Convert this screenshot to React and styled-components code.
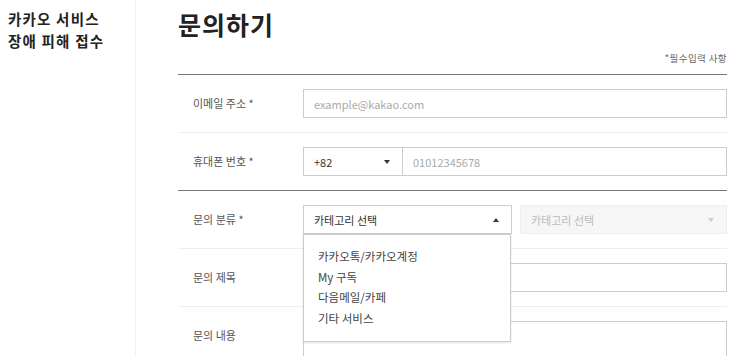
import React from "react";
import styled, { createGlobalStyle } from "styled-components";

const GlobalStyle = createGlobalStyle`
  html, body {
    margin: 0;
    padding: 0;
    background: #fff;
  }
  body {
    font-family: "Noto Sans CJK KR", "Noto Sans", sans-serif;
    color: #333;
    overflow: hidden;
  }
`;

const Page = styled.div`
  display: flex;
  width: 745px;
  height: 356px;
  overflow: hidden;
`;

const Side = styled.aside`
  width: 127px;
  padding: 8px 0 0 8px;
  border-right: 1px solid #f3f3f3;
  flex-shrink: 0;

  h2 {
    margin: 0;
    font-size: 14.5px;
    line-height: 22px;
    font-weight: 700;
    color: #222;
    letter-spacing: 1.2px;
  }
`;

const Main = styled.main`
  width: 549px;
  padding: 8px 0 0 42px;
`;

const Title = styled.h1`
  margin: 0;
  font-size: 25px;
  line-height: 32px;
  font-weight: 700;
  color: #222;
  letter-spacing: 1px;
`;

const Note = styled.p`
  margin: 11px 0 0;
  font-size: 9.5px;
  line-height: 14px;
  color: #666;
  text-align: right;
  letter-spacing: 0.4px;
`;

const Form = styled.div`
  margin-top: 9px;
  border-top: 1px solid #777;
`;

const Row = styled.div`
  position: relative;
  display: flex;
  align-items: ${(p) => (p.$top ? "flex-start" : "center")};
  padding: 14px 0;
  border-bottom: 1px solid ${(p) => (p.$strong ? "#777" : "#eee")};
`;

const Label = styled.label`
  width: 110px;
  padding-left: 15px;
  flex-shrink: 0;
  font-size: 11px;
  line-height: 29px;
  color: #555;
`;

const Field = styled.div`
  flex: 1;
  display: flex;
  gap: ${(p) => p.$gap || 0}px;
`;

const Input = styled.div`
  flex: 1;
  height: 29px;
  box-sizing: border-box;
  border: 1px solid #ccc;
  padding: 0 10px;
  display: flex;
  align-items: center;
  font-size: 11px;
  color: #aaa;
  ${(p) => p.$joined && "border-left: none;"}
`;

const Select = styled.div`
  position: relative;
  width: ${(p) => p.$w}px;
  flex: ${(p) => (p.$w ? "none" : 1)};
  height: 29px;
  box-sizing: border-box;
  border: 1px solid ${(p) => (p.$disabled ? "#eee" : "#ccc")};
  background: ${(p) => (p.$disabled ? "#f6f6f6" : "#fff")};
  padding: 0 12px 0 10px;
  display: flex;
  align-items: center;
  justify-content: space-between;
  font-size: 11px;
  color: ${(p) => (p.$disabled ? "#bbb" : "#333")};
`;

const Caret = styled.span`
  width: 0;
  height: 0;
  border-left: 3px solid transparent;
  border-right: 3px solid transparent;
  ${(p) =>
    p.$up
      ? `border-bottom: 4px solid ${p.$light ? "#ccc" : "#333"};`
      : `border-top: 4px solid ${p.$light ? "#ccc" : "#333"};`}
`;

const Menu = styled.ul`
  position: absolute;
  top: 28px;
  left: -1px;
  width: 208px;
  box-sizing: border-box;
  margin: 0;
  padding: 11px 14px 13px;
  list-style: none;
  background: #fff;
  border: 1px solid #ccc;
  box-shadow: 0 1px 2px rgba(0, 0, 0, 0.12);
  z-index: 2;

  li {
    font-size: 11.5px;
    line-height: 20.5px;
    color: #444;
  }
`;

const Textarea = styled.div`
  flex: 1;
  height: 80px;
  border: 1px solid #ccc;
`;

const categories = ["카카오톡/카카오계정", "My 구독", "다음메일/카페", "기타 서비스"];

export default function App() {
  return (
    <Page>
      <GlobalStyle />
      <Side>
        <h2>카카오 서비스</h2>
        <h2>장애 피해 접수</h2>
      </Side>
      <Main>
        <Title>문의하기</Title>
        <Note>*필수입력 사항</Note>
        <Form>
          <Row>
            <Label>이메일 주소 *</Label>
            <Field>
              <Input>example@kakao.com</Input>
            </Field>
          </Row>
          <Row $strong>
            <Label>휴대폰 번호 *</Label>
            <Field>
              <Select $w={100}>
                +82 <Caret />
              </Select>
              <Input $joined>01012345678</Input>
            </Field>
          </Row>
          <Row>
            <Label>문의 분류 *</Label>
            <Field $gap={8}>
              <Select $w={209}>
                카테고리 선택 <Caret $up />
                <Menu>
                  {categories.map((c) => (
                    <li key={c}>{c}</li>
                  ))}
                </Menu>
              </Select>
              <Select $disabled>
                카테고리 선택 <Caret $light />
              </Select>
            </Field>
          </Row>
          <Row>
            <Label>문의 제목</Label>
            <Field>
              <Input />
            </Field>
          </Row>
          <Row $top>
            <Label>문의 내용</Label>
            <Field>
              <Textarea />
            </Field>
          </Row>
        </Form>
      </Main>
    </Page>
  );
}
